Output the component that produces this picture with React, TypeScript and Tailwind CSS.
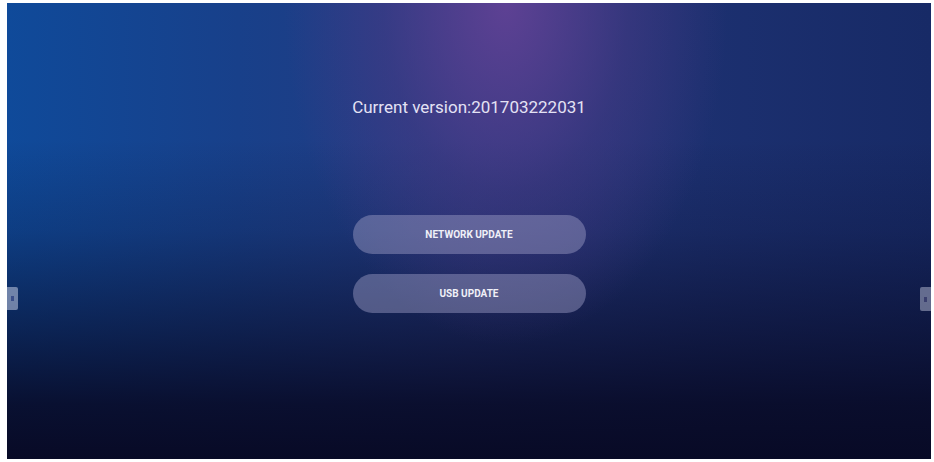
export default function App() {
  return (
    <div className="w-[934px] h-[462px] bg-white pl-[7px] pt-[3px] pr-[3px] pb-[3px]" style={{ fontFamily: 'Roboto, "Noto Sans", sans-serif' }}>
      <div className="relative w-full h-full overflow-hidden bg-[radial-gradient(ellipse_24%_75%_at_54%_0%,rgba(100,66,150,0.9),rgba(80,58,135,0.45)_55%,transparent_100%),linear-gradient(to_bottom,transparent_30%,rgba(8,10,38,0.2)_50%,rgba(8,10,38,0.6)_72%,rgba(8,10,38,0.9)_88%,#080a26_100%),linear-gradient(to_right,#0f4a9a_0%,#18408a_25%,#253a80_50%,#1c3070_75%,#172a66_100%)] flex flex-col items-center">
        <p className="mt-[94px] text-[17px] leading-[20px] text-[#e4e2f4]">Current version:201703222031</p>

        <div className="mt-[98px] flex flex-col gap-[20px]">
          <button className="w-[233px] h-[39px] rounded-full bg-[rgba(160,160,200,0.45)] text-[10px] font-bold text-[#f0f0f8]">
            NETWORK UPDATE
          </button>
          <button className="w-[233px] h-[39px] rounded-full bg-[rgba(160,160,200,0.45)] text-[10px] font-bold text-[#f0f0f8]">
            USB UPDATE
          </button>
        </div>

        {/* side handles */}
        <div className="absolute left-0 top-[284px] w-[11px] h-[23px] bg-[rgba(180,190,215,0.6)] rounded-r-[2px] flex items-center justify-center">
          <span className="w-[3px] h-[5px] bg-[#3b4f8a]" />
        </div>
        <div className="absolute right-0 top-[284px] w-[11px] h-[24px] bg-[rgba(170,175,200,0.55)] rounded-l-[2px] flex items-center justify-center">
          <span className="w-[3px] h-[5px] bg-[#3a3f6e]" />
        </div>
      </div>
    </div>
  );
}
